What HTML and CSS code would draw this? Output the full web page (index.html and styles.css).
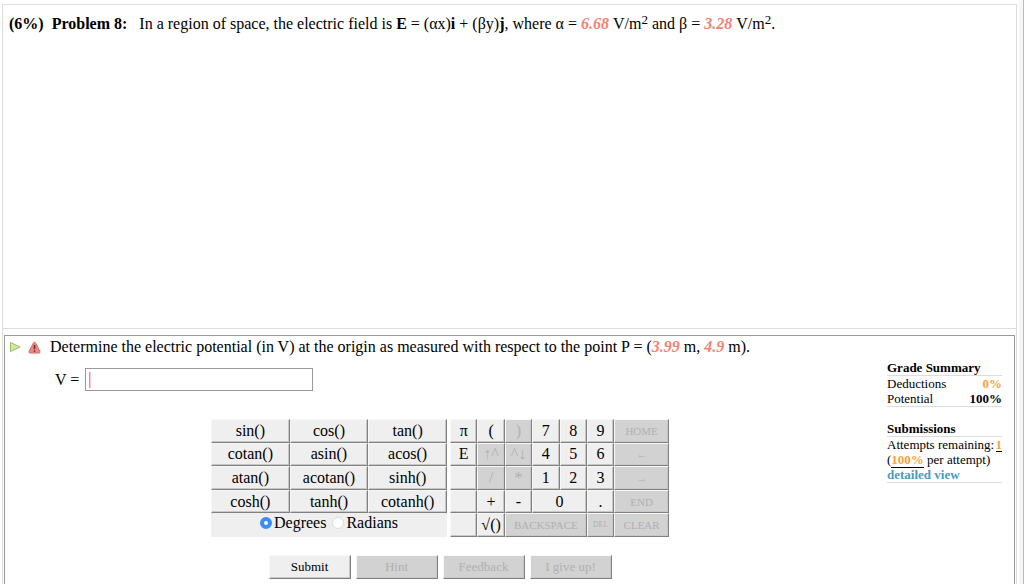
FILE: index.html
```html
<!DOCTYPE html>
<html lang="en">
<head>
  <meta charset="UTF-8">
  <meta name="viewport" content="width=device-width, initial-scale=1">
  <title>Problem 8</title>
  <link rel="stylesheet" href="styles.css">
</head>
<body>
  <div class="page">
    <main class="assignment">
      <section class="statement">
        <p><b>(6%)</b>&nbsp; <b>Problem 8:</b> &nbsp; In a region of space, the electric field is <b>E</b> = (αx)<b>i</b> + (βy)<b>j</b>, where α = <span class="var">6.68</span> V/m<sup>2</sup> and β = <span class="var">3.28</span> V/m<sup>2</sup>.</p>
      </section>

      <section class="part">
        <div class="work">
          <div class="question">
            <svg class="icon" viewBox="0 0 12 12" aria-hidden="true">
              <path d="M1.5 1.5 L11 6 L1.5 10.5 Z" fill="#d3e8a4" stroke="#9cbc6a" stroke-linejoin="round"/>
            </svg>
            <svg class="icon warn" viewBox="0 0 13 13" aria-hidden="true">
              <path d="M6.5 1.2 Q7.2 1.2 7.6 2 L12 10.5 Q12.3 12 11 12 H2 Q.7 12 1 10.5 L5.4 2 Q5.8 1.2 6.5 1.2 Z" fill="#ea8a84" stroke="#cf6e6a"/>
              <path d="M6.5 4 V8.2 M6.5 9.3 V10.8" stroke="#7d2626" stroke-width="1.6"/>
            </svg>
            <p>Determine the electric potential (in V) at the origin as measured with respect to the point P = (<span class="var">3.99</span> m, <span class="var">4.9</span> m).</p>
          </div>

          <div class="answer">
            <label for="answer">V =</label>
            <input type="text" id="answer" value="|">
          </div>

          <div class="calculator">
            <div class="functions">
              <button type="button">sin()</button>
              <button type="button">cos()</button>
              <button type="button">tan()</button>
              <button type="button">cotan()</button>
              <button type="button">asin()</button>
              <button type="button">acos()</button>
              <button type="button">atan()</button>
              <button type="button">acotan()</button>
              <button type="button">sinh()</button>
              <button type="button">cosh()</button>
              <button type="button">tanh()</button>
              <button type="button">cotanh()</button>
              <div class="angle">
                <input type="radio" name="angle" id="deg" checked><label for="deg">Degrees</label>
                <input type="radio" name="angle" id="rad"><label for="rad">Radians</label>
              </div>
            </div>
            <div class="keys">
              <button type="button">π</button>
              <button type="button">(</button>
              <button type="button" disabled>)</button>
              <button type="button">7</button>
              <button type="button">8</button>
              <button type="button">9</button>
              <button type="button" class="span2 small" disabled>HOME</button>

              <button type="button">E</button>
              <button type="button" disabled>↑^</button>
              <button type="button" disabled>^↓</button>
              <button type="button">4</button>
              <button type="button">5</button>
              <button type="button">6</button>
              <button type="button" class="span2 small" disabled>←</button>

              <button type="button"></button>
              <button type="button" disabled>/</button>
              <button type="button" disabled>*</button>
              <button type="button">1</button>
              <button type="button">2</button>
              <button type="button">3</button>
              <button type="button" class="span2 small" disabled>→</button>

              <button type="button"></button>
              <button type="button">+</button>
              <button type="button">-</button>
              <button type="button" class="span2">0</button>
              <button type="button">.</button>
              <button type="button" class="span2 small" disabled>END</button>

              <button type="button"></button>
              <button type="button">√()</button>
              <button type="button" class="span3 small" disabled>BACKSPACE</button>
              <button type="button" class="tiny" disabled>DEL</button>
              <button type="button" class="span2 small" disabled>CLEAR</button>
            </div>
          </div>

          <div class="actions">
            <button type="submit">Submit</button>
            <button type="button" disabled>Hint</button>
            <button type="button" disabled>Feedback</button>
            <button type="button" disabled>I give up!</button>
          </div>
        </div>

        <aside class="summary">
          <h2>Grade Summary</h2>
          <dl class="box">
            <div><dt>Deductions</dt><dd class="penalty">0%</dd></div>
            <div><dt>Potential</dt><dd>100%</dd></div>
          </dl>
          <h2>Submissions</h2>
          <div class="box">
            <div class="row">Attempts remaining: <span class="count">1</span></div>
            <div>(<span class="count">100%</span> per attempt)</div>
            <div><a href="#">detailed view</a></div>
          </div>
        </aside>
      </section>
    </main>
    <div class="edge"></div>
  </div>
</body>
</html>
```
FILE: styles.css
```css
* {
  box-sizing: border-box;
}
body {
  margin: 0;
  background: #fff;
  color: #000;
  font-family: "Liberation Serif", "Times New Roman", serif;
  font-size: 16px;
  line-height: 20px;
}
p, h2, dl, dd {
  margin: 0;
}
button, input {
  font-family: inherit;
  font-size: inherit;
}
.page {
  display: flex;
  height: 100vh;
  overflow: hidden;
}
.assignment {
  flex: 1;
  display: flex;
  flex-direction: column;
  margin: 4px 2px 0;
  border: 1px solid #ddd;
  border-bottom: 0;
}
.edge {
  width: 5px;
  background: #f7f7f7;
  border-right: 1px solid #bbb;
}
.statement {
  min-height: 324px;
  padding: 9px 6px;
  border-bottom: 1px solid #ddd;
}
sup {
  font-size: 13px;
  line-height: 0;
  vertical-align: 5px;
}
.var {
  color: #fa8072;
  font-weight: bold;
  font-style: italic;
}

.part {
  flex: 1;
  display: flex;
  margin: 6px 1px 0;
  border: 1px solid #999;
  border-bottom: 0;
}
.work {
  flex: 1;
  padding-left: 4px;
}
.question {
  display: flex;
  align-items: center;
  margin-top: 1px;
}
.icon {
  width: 12px;
  height: 12px;
  margin-right: 7px;
}
.warn {
  width: 13px;
  height: 13px;
  margin-right: 9px;
}
.answer {
  display: flex;
  align-items: center;
  gap: 6px;
  margin: 11px 0 0 46px;
}
.answer input {
  width: 228px;
  height: 23px;
  padding: 0 2px 2px;
  border: 1px solid #999;
  color: #f33;
}

.calculator {
  display: flex;
  justify-content: center;
  gap: 3px;
  margin-top: 28px;
}
.functions, .keys {
  display: grid;
  grid-template-rows: repeat(5, 1fr);
  height: 118px;
}
.functions {
  grid-template-columns: repeat(3, 1fr);
  width: 236px;
  background: #efefef;
}
.keys {
  grid-template-columns: repeat(8, 1fr);
  width: 219px;
}
button {
  min-width: 0;
  padding: 0;
  background: #efefef;
  color: #000;
  border: 1px solid #f8f8f8;
  border-right-color: #808080;
  border-bottom-color: #808080;
  box-shadow: inset -1px -1px #c8c8c8;
  line-height: 18px;
}
button:disabled {
  background: #d2d2d2;
  color: #b0b0b0;
}
.calculator button {
  overflow: hidden;
  white-space: nowrap;
}
.span2 {
  grid-column: span 2;
}
.span3 {
  grid-column: span 3;
}
.small {
  font-size: 11px;
}
.tiny {
  font-size: 8px;
}
.angle {
  grid-column: span 3;
  display: flex;
  justify-content: center;
  align-items: flex-start;
}
.angle input {
  appearance: none;
  width: 12px;
  height: 12px;
  margin: 4px 2px 0 0;
  border: 1px solid #ddd;
  border-radius: 50%;
  background: #fff;
}
.angle input:checked {
  border: 4px solid #3b8cf8;
  margin-left: 6px;
}
.angle label {
  margin-right: 6px;
}

.actions {
  display: flex;
  justify-content: center;
  gap: 5px;
  margin-top: 18px;
}
.actions button {
  width: 82px;
  height: 24px;
  font-size: 13px;
}
.calculator .small {
  font-size: 11px;
}

.summary {
  width: 143px;
  padding: 24px 12px 0 16px;
  font-size: 13px;
  line-height: 15px;
}
.summary h2 {
  font-size: 13px;
  line-height: 15px;
}
.box {
  margin-bottom: 14px;
  border-top: 1px solid #ddd;
  border-bottom: 1px solid #ddd;
}
.box > .row, dl > div {
  display: flex;
  justify-content: space-between;
}
.box > .row {
  height: 15px;
}
dd {
  font-weight: bold;
}
.penalty, .count {
  color: #f9a23c;
  font-weight: bold;
}
.count {
  border-bottom: 1px solid #000;
}
.summary a {
  color: #4a9bbd;
  font-weight: bold;
  text-decoration: none;
}
```
